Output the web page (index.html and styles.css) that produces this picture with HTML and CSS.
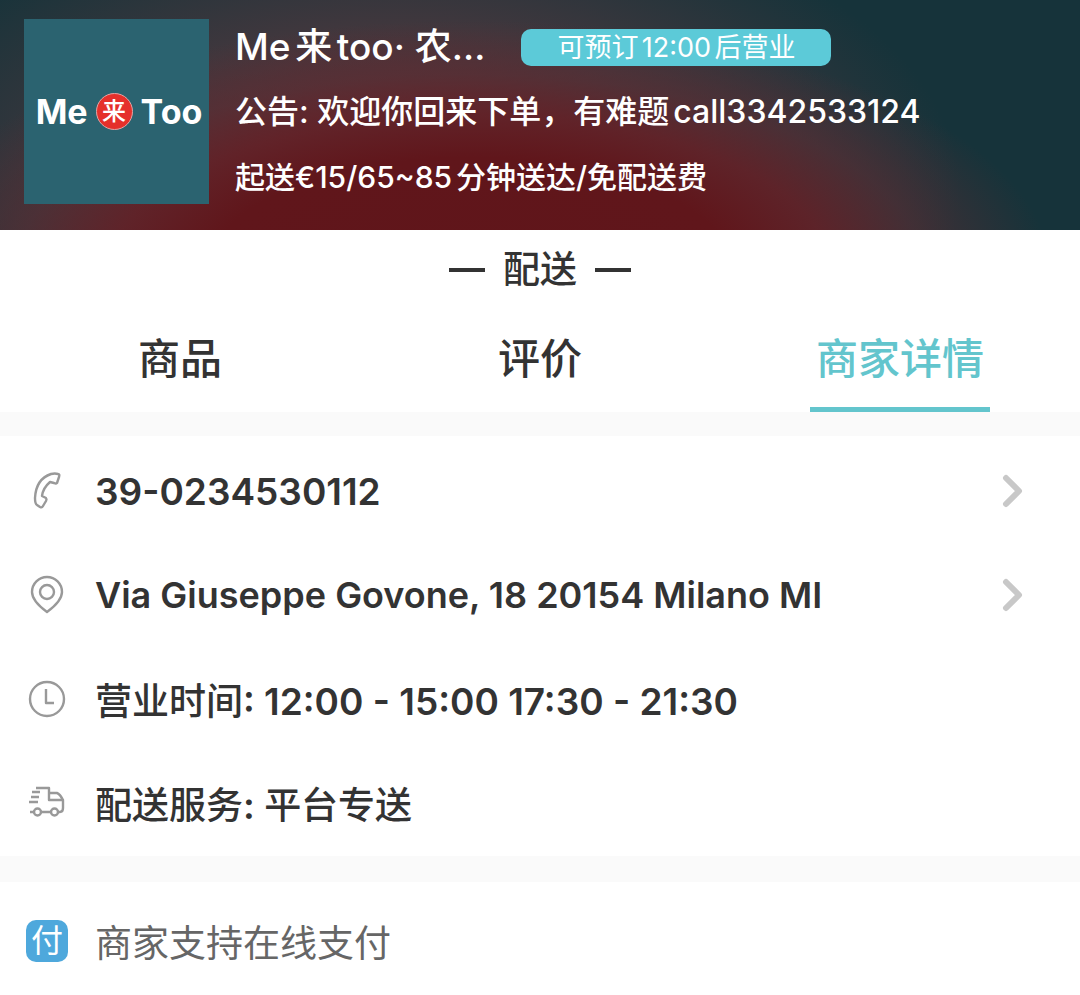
FILE: index.html
```html
<!DOCTYPE html>
<html lang="zh-CN">
    <head>
        <title>Me来too</title>
        <meta charset="UTF-8">
        <meta name="viewport" content="width=device-width, initial-scale=1">
        <link rel="stylesheet" href="styles.css">
    </head>

    <body>

        <header class="shop">
            <div class="logo">
                <span>Me</span>
                <span class="logo-seal">来</span>
                <span>Too</span>
            </div>
            <div class="shop-info">
                <div class="shop-title">
                    <h1>Me来too· 农…</h1>
                    <span class="badge">可预订12:00后营业</span>
                </div>
                <p class="notice"><span class="label">公告:</span> 欢迎你回来下单，有难题call3342533124</p>
                <p class="terms">起送€15/65~85分钟送达/免配送费</p>
            </div>
        </header>

        <main>
            <h2 class="mode">配送</h2>

            <nav class="tabs">
                <button type="button">商品</button>
                <button type="button">评价</button>
                <button type="button" class="active">商家详情</button>
            </nav>

            <section class="details">
                <a class="row" href="#phone">
                    <svg class="icon" viewBox="0 0 42 42">
                        <path d="M25 4 Q29 3 32 4 Q34 4 33 7 L31 13 Q30 14 28 13 L24 12 Q17 18 16 26 L20 28 Q21 29 20 31 L17 36 Q16 38 14 37 L11 35 Q9 34 9 28 Q10 9 25 4 Z"/>
                    </svg>
                    <b>39-0234530112</b>
                    <svg class="arrow" viewBox="0 0 22 34"><path d="M4 4 L17 17 L4 30"/></svg>
                </a>
                <a class="row" href="#map">
                    <svg class="icon" viewBox="0 0 42 42">
                        <path d="M21 38 Q6 27 6 18 A15 15 0 0 1 36 18 Q36 27 21 38 Z"/>
                        <circle cx="21" cy="18" r="7"/>
                    </svg>
                    <b class="address">Via Giuseppe Govone, 18 20154 Milano MI</b>
                    <svg class="arrow" viewBox="0 0 22 34"><path d="M4 4 L17 17 L4 30"/></svg>
                </a>
                <div class="row">
                    <svg class="icon" viewBox="0 0 42 42">
                        <circle cx="21" cy="21" r="17"/>
                        <path d="M20 11 V25 H28"/>
                    </svg>
                    <span class="label">营业时间<b>: 12:00 - 15:00 17:30 - 21:30</b></span>
                </div>
                <div class="row">
                    <svg class="icon" viewBox="0 0 42 42">
                        <path d="M10 6 H23 V18 H37 M6 10 H14 M5 15 H13 M3 20 H12 M23 11 H31 Q34 12 37 18 V26 Q37 30 34 30 H32 M4 30 H8 M15 30 H25"/>
                        <circle cx="11.5" cy="30" r="3.5"/>
                        <circle cx="28.5" cy="30" r="3.5"/>
                    </svg>
                    <span class="label">配送服务<b>: </b>平台专送</span>
                </div>
            </section>

            <section class="payment">
                <div class="row">
                    <span class="pay-icon">付</span>
                    <span>商家支持在线支付</span>
                </div>
            </section>
        </main>

    </body>
</html>
```
FILE: styles.css
```css
*{
    box-sizing: border-box;
}

body{
    margin: 0;
    background-color: #fff;
    color: #333;
    font-family: Inter, "Noto Sans CJK SC", sans-serif;
    font-weight: 500;
    text-autospace: normal;
}

h1, h2, p{
    margin: 0;
    font-weight: 500;
}

b{
    font-weight: 600;
}

.label{
    text-autospace: no-autospace;
}

.shop{
    display: flex;
    gap: 26px;
    padding: 19px 24px 26px;
    color: #fff;
    background-color: #16333a;
    background-image:
        radial-gradient(ellipse 580px 250px at 470px 270px, #60151a 0%, #60161b 45%, rgba(98, 33, 39, 0.9) 62%, rgba(90, 44, 50, 0.6) 78%, rgba(70, 52, 58, 0) 100%),
        radial-gradient(ellipse 560px 300px at 400px 190px, #5c3036 0%, #5a3238 30%, rgba(74, 56, 62, 0.8) 55%, rgba(60, 62, 66, 0) 100%);
}

.logo{
    display: flex;
    flex: none;
    align-items: center;
    justify-content: center;
    gap: 8px;
    width: 185px;
    height: 185px;
    padding-left: 5px;
    background-color: #2b6370;
    font-size: 34px;
    font-weight: 700;
}

.logo-seal{
    width: 37px;
    height: 37px;
    border: 1px solid #e3a5a5;
    border-radius: 50%;
    background-color: #e5302b;
    font-size: 24px;
    font-weight: 500;
    line-height: 36px;
    text-align: center;
}

.shop-info{
    display: flex;
    flex-direction: column;
    gap: 17px;
    padding-top: 4px;
}

.shop-title{
    display: flex;
    align-items: center;
    gap: 36px;
}

.shop-title h1{
    font-size: 37px;
    line-height: 48px;
}

.badge{
    padding: 0 36px;
    border-radius: 10px;
    background-color: #5ccad8;
    font-size: 27px;
    font-weight: 400;
    line-height: 37px;
}

.notice{
    font-size: 32px;
    line-height: 48px;
}

.terms{
    font-size: 30px;
    line-height: 48px;
}

.mode{
    display: flex;
    align-items: center;
    justify-content: center;
    gap: 18px;
    font-size: 37px;
    line-height: 80px;
}

.mode::before, .mode::after{
    content: "";
    width: 36px;
    height: 4px;
    background-color: #333;
}

.tabs{
    display: grid;
    grid-template-columns: repeat(3, 1fr);
    justify-items: center;
}

.tabs button{
    width: 50%;
    padding: 0;
    border: 0;
    border-bottom: 5px solid transparent;
    background: none;
    color: #333;
    font: inherit;
    font-size: 42px;
    line-height: 97px;
    white-space: nowrap;
    cursor: pointer;
}

.tabs .active{
    border-color: #63c5cd;
    color: #63c5cd;
}

.details{
    padding: 3px 0 1px;
    border-top: 24px solid #fafafa;
}

.row{
    display: flex;
    align-items: center;
    gap: 27px;
    min-height: 104px;
    padding: 0 56px 0 26px;
    color: #333;
    font-size: 37px;
    text-decoration: none;
}

.address{
    font-size: 36px;
}

.icon{
    flex: none;
    width: 42px;
    height: 42px;
    fill: none;
    stroke: #999;
    stroke-width: 2.4;
    stroke-linejoin: round;
}

.arrow{
    flex: none;
    width: 22px;
    height: 34px;
    margin-left: auto;
    fill: none;
    stroke: #c8c8c8;
    stroke-width: 6;
    stroke-linecap: round;
    stroke-linejoin: round;
}

.payment{
    padding-top: 7px;
    border-top: 26px solid #fafafa;
}

.payment .row{
    color: #666;
    font-weight: 400;
}

.pay-icon{
    width: 42px;
    height: 42px;
    border-radius: 10px;
    background-color: #4ea8dc;
    color: #fff;
    font-size: 32px;
    line-height: 42px;
    text-align: center;
}
```
